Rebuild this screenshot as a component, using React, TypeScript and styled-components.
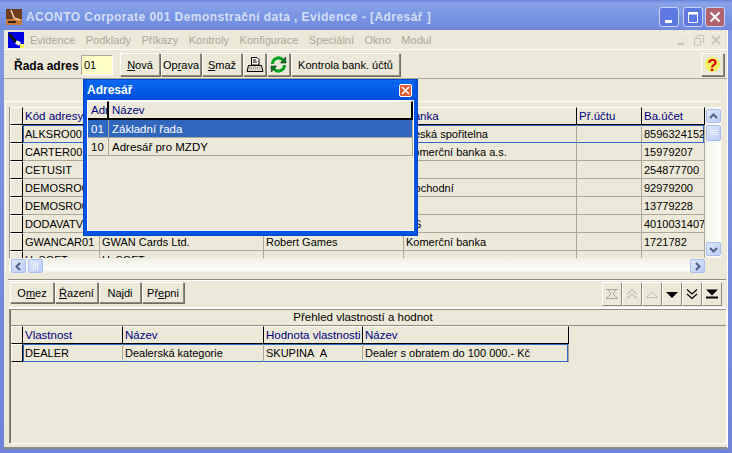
import React from 'react';
import styled, { createGlobalStyle } from 'styled-components';

const GlobalStyle = createGlobalStyle`
  html, body {
    margin: 0;
    padding: 0;
    background: #7a96df;
  }
  * {
    box-sizing: border-box;
  }
`;

const face = '#ece9d8';
const line = '#aca899';
const navy = '#000080';
const select = '#316ac5';

const Window = styled.div`
  width: 732px;
  height: 453px;
  overflow: hidden;
  position: relative;
  display: flex;
  flex-direction: column;
  padding: 0 4px 4px;
  background: linear-gradient(#7f9ae2, #6f84d8);
  font-family: 'Liberation Sans', Arial, sans-serif;
  font-size: 11px;
  color: #000;
`;

const TitleBar = styled.div`
  height: 30px;
  flex: none;
  margin: 0 -4px;
  padding: 3px 7px 0 6px;
  display: flex;
  align-items: center;
  gap: 4px;
  background: linear-gradient(#6b87dc 0%, #8aa4ea 12%, #7a96e4 50%, #7089dc 100%);
`;

const TitleText = styled.div`
  flex: 1;
  color: #d5dff7;
  font-weight: bold;
  font-size: 12px;
  letter-spacing: 0.45px;
  white-space: nowrap;
`;

const CaptionButton = styled.div<{ $close?: boolean }>`
  width: 20px;
  height: 20px;
  border: 1px solid #c9d4f4;
  border-radius: 3px;
  background: ${(p) => (p.$close ? '#b1626f' : '#5d78e0')};
  margin-left: ${(p) => (p.$close ? -2 : 0)}px;
  display: flex;
  align-items: center;
  justify-content: center;
`;

const Client = styled.div`
  flex: 1;
  min-height: 0;
  display: flex;
  flex-direction: column;
  background: ${face};
  border-right: 1px solid #fff;
  border-bottom: 2px solid #8f8c7e;
`;

const MenuBar = styled.div`
  height: 20px;
  flex: none;
  display: flex;
  align-items: center;
  padding: 0 3px 0 4px;
  background: ${face};
  border-bottom: 1px solid #fff;
`;

const MenuIcon = styled.div`
  width: 16px;
  height: 16px;
  margin-right: 6px;
  flex: none;
`;

const MenuItem = styled.span`
  color: #aca899;
  font-size: 11px;
  margin-right: 10.5px;
`;

const MdiButtons = styled.div`
  margin-left: auto;
  display: flex;
  gap: 1px;
`;

const MdiButton = styled.div`
  width: 16px;
  height: 16px;
  border: 1px solid #f1efe3;
  display: flex;
  align-items: center;
  justify-content: center;
`;

const Toolbar = styled.div`
  height: 29px;
  flex: none;
  display: flex;
  align-items: center;
  padding: 1px 2px 0 10px;
  border-bottom: 1px solid ${line};
`;

const SeriesLabel = styled.label`
  font-weight: bold;
  font-size: 12px;
  width: 67px;
  flex: none;
  margin-top: 2px;
  white-space: nowrap;
`;

const SeriesInput = styled.div`
  width: 32px;
  height: 20px;
  flex: none;
  background: #ffffc8;
  border: 1px solid;
  border-color: #aca899 #fff #fff #aca899;
  padding: 3px 2px;
  margin-right: 7px;
  font-size: 11px;
`;

const Btn = styled.button<{ $w: number; $h?: number }>`
  width: ${(p) => p.$w}px;
  height: ${(p) => p.$h ?? 23}px;
  flex: none;
  padding: 0;
  margin: 0 1px 0 0;
  font: inherit;
  font-size: 11px;
  color: #000;
  background: ${face};
  border: 1px solid;
  border-color: #fff #8f8c7e #8f8c7e #fff;
  box-shadow: 1px 1px 0 #716f64;
  display: inline-flex;
  align-items: center;
  justify-content: center;
`;

const ToolSpacer = styled.div`
  flex: 1;
`;

const Gap = styled.div`
  height: 22px;
  flex: none;
`;

const GridPanel = styled.div`
  flex: none;
  height: 172px;
  margin: 0 6px 0 1px;
  border-top: 1px solid #fff;
  border-left: 1px solid #fff;
  padding: 5px 0 0 3px;
  display: flex;
  flex-direction: column;
`;

const GridArea = styled.div`
  flex: 1;
  min-height: 0;
  display: flex;
`;

const GridClip = styled.div`
  flex: 1;
  min-width: 0;
  overflow: hidden;
  border-left: 1px solid #8f8c7e;
`;

const Row = styled.div<{ $cols: string; $h?: number }>`
  display: grid;
  grid-template-columns: ${(p) => p.$cols};
  height: ${(p) => p.$h ?? 18}px;
`;

const Indicator = styled.div`
  background: ${face};
  border: 1px solid;
  border-color: #fff #000 #000 #fff;
`;

const Head = styled.div`
  color: ${navy};
  padding: 2px 0 0 2px;
  white-space: nowrap;
  overflow: hidden;
  background: ${face};
  border-top: 1px solid #fff;
  border-right: 1px solid #000;
  border-bottom: 1px solid #000;
  font-size: 11.5px;
`;

const edgeShadow = { first: `, inset 1px 0 0 ${select}`, last: `, inset -1px 0 0 ${select}` };

const Cell = styled.div<{ $active?: boolean; $edge?: 'first' | 'last' }>`
  padding: 3px 0 0 2px;
  white-space: nowrap;
  overflow: hidden;
  font-size: 11px;
  border-right: 1px solid ${line};
  border-bottom: 1px solid ${line};
  ${(p) =>
    p.$active &&
    `border-bottom-color: ${select};
     box-shadow: inset 0 1px 0 ${select}${p.$edge ? edgeShadow[p.$edge] : ''};`}
`;

const VScroll = styled.div`
  width: 16px;
  flex: none;
  display: flex;
  flex-direction: column;
  gap: 2px;
  padding: 2px 0 2px 1px;
  background: linear-gradient(90deg, #f3f2ea, #fdfdfb);
`;

const Track = styled.div`
  flex: 1;
`;

const HScroll = styled.div`
  height: 15px;
  flex: none;
  display: flex;
  align-items: flex-end;
  gap: 2px;
  margin-right: 16px;
  padding-left: 2px;
  background: linear-gradient(#f0efe6, #fdfdfb 80%, ${face});
`;

const ScrollBtn = styled.div<{ $thumb?: boolean }>`
  width: 15px;
  height: ${(p) => (p.$thumb ? 16 : 14)}px;
  flex: none;
  border: 1px solid #a9bff0;
  border-radius: 2px;
  background: linear-gradient(135deg, #dfe8fb, #bcccf5);
  display: flex;
  align-items: center;
  justify-content: center;
`;

const HThumb = styled(ScrollBtn)`
  height: 14px;
`;

const NavBar = styled.div`
  height: 28px;
  flex: none;
  margin: 6px 1px 0 4px;
  padding: 2px 4px 0 2px;
  display: flex;
  align-items: flex-start;
  border-top: 1px solid #8f8c7e;
  box-shadow: inset 0 1px 0 #fff;
`;

const NavSpacer = styled.div`
  flex: 1;
`;

const NavButton = styled.div`
  width: 20px;
  height: 24px;
  flex: none;
  background: ${face};
  border: 1px solid;
  border-color: #fff #8f8c7e #8f8c7e #fff;
  display: flex;
  align-items: center;
  justify-content: center;
`;

const DetailPanel = styled.div`
  flex: 1;
  min-height: 0;
  margin: 0 1px 4px 5px;
  border-top: 2px solid #fff;
  display: flex;
  flex-direction: column;
`;

const DetailInner = styled.div`
  flex: 1;
  border-top: 1px solid #8f8c7e;
  border-left: 1px solid #8f8c7e;
  box-shadow: inset 1px 0 0 #716f64, 1px 1px 0 #fff;
  display: flex;
  flex-direction: column;
  padding-left: 1px;
`;

const DetailCaption = styled.div`
  height: 16px;
  flex: none;
  text-align: center;
  padding-top: 1px;
  padding-right: 10px;
  font-size: 11.5px;
  border-bottom: 1px solid #8f8c7e;
  margin-left: -1px;
`;

const Dialog = styled.div`
  position: absolute;
  left: 83px;
  top: 79px;
  width: 335px;
  height: 157px;
  background: #0054e3;
  border: 1px solid #0047c8;
  padding: 0 3px 4px;
  display: flex;
  flex-direction: column;
`;

const DialogTitle = styled.div`
  height: 20px;
  flex: none;
  display: flex;
  align-items: center;
  justify-content: space-between;
  color: #fff;
  font-weight: bold;
  font-size: 12px;
  background: linear-gradient(#0a6af0, #0058e6 60%, #0450d8);
`;

const DialogClose = styled.div`
  width: 13px;
  height: 13px;
  margin-right: 2px;
  border: 1px solid #fff;
  border-radius: 2px;
  background: #dd5a33;
  display: flex;
  align-items: center;
  justify-content: center;
`;

const DialogBody = styled.div`
  flex: 1;
  background: ${face};
  border: 1px solid #fff;
`;

const DialogHead = styled(Head)`
  padding-left: 3px;
  border-bottom-width: 2px;
  border-right-width: 2px;
`;

const DialogCell = styled.div<{ $sel?: boolean; $dark?: boolean }>`
  padding: 3px 0 0 3px;
  white-space: nowrap;
  overflow: hidden;
  font-size: 11.5px;
  color: ${(p) => (p.$sel ? '#fff' : '#000')};
  background: ${(p) => (p.$sel ? (p.$dark ? select : '#3166bd') : 'transparent')};
  border-right: 1px solid ${line};
  border-bottom: 1px solid ${line};
`;

const Underline = styled.span`
  text-decoration: underline;
`;

const gridCols = '13px 77px 164px 140px 173px 65px 63px';
const rows = [
  ['ALKSRO001', '', '', 'Česká spořitelna', '', '8596324152'],
  ['CARTER001', '', '', 'Komerční banka a.s.', '', '15979207'],
  ['CETUSIT', '', '', '', '', '254877700'],
  ['DEMOSRO01', '', '', 'Obchodní', '', '92979200'],
  ['DEMOSRO02', '', '', '', '', '13779228'],
  ['DODAVATV', '', '', 'ČS', '', '4010031407'],
  ['GWANCAR01', 'GWAN Cards Ltd.', 'Robert Games', 'Komerční banka', '', '1721782'],
  ['HxSOFT', 'HxSOFT', '', '', '', ''],
];

const menu = ['Evidence', 'Podklady', 'Příkazy', 'Kontroly', 'Konfigurace', 'Speciální', 'Okno', 'Modul'];
const detailCols = '12px 100px 141px 99px 206px';

const edgeOf = (i: number, last: number) => (i === 0 ? 'first' : i === last ? 'last' : undefined);

const Chevron = ({ d, color = '#4d6185' }: { d: string; color?: string }) => (
  <svg width="9" height="9" viewBox="0 0 9 9">
    <path d={d} fill="none" stroke={color} strokeWidth="2" />
  </svg>
);

const NavIcon = ({ children }: { children: React.ReactNode }) => (
  <svg width="14" height="12" viewBox="0 0 14 12">
    {children}
  </svg>
);

const App: React.FC = () => {
  return (
    <Window>
      <GlobalStyle />
      <TitleBar>
        <svg width="16" height="16" viewBox="0 0 16 16">
          <rect width="16" height="16" fill="#6e3c1c" />
          <rect y="10" width="16" height="6" fill="#c87a3c" />
          <path d="M5 1 L8 9 L14 11" fill="none" stroke="#f0d8b8" strokeWidth="1.5" />
          <path d="M2 13 H10" stroke="#3a2010" strokeWidth="2" />
        </svg>
        <TitleText>ACONTO Corporate 001 Demonstrační data , Evidence - [Adresář ]</TitleText>
        <CaptionButton>
          <svg width="14" height="14" viewBox="0 0 14 14">
            <rect x="3" y="10" width="7" height="3" fill="#fff" />
          </svg>
        </CaptionButton>
        <CaptionButton>
          <svg width="14" height="14" viewBox="0 0 14 14">
            <path d="M2.5 3 V12.5 H11.5 V3" fill="none" stroke="#fff" strokeWidth="1" />
            <rect x="2" y="2" width="10" height="2.5" fill="#fff" />
          </svg>
        </CaptionButton>
        <CaptionButton $close>
          <svg width="14" height="14" viewBox="0 0 14 14">
            <path d="M2.5 2.5 L11.5 11.5 M11.5 2.5 L2.5 11.5" stroke="#fff" strokeWidth="2.2" />
          </svg>
        </CaptionButton>
      </TitleBar>
      <Client>
        <MenuBar>
          <MenuIcon>
            <svg width="16" height="16" viewBox="0 0 16 16">
              <rect width="16" height="16" fill="#0000e0" />
              <path d="M1 2 L8 10" stroke="#111" strokeWidth="3" />
              <path d="M8 10 L12 12" stroke="#fff" strokeWidth="4" />
              <rect x="12" y="12" width="4" height="4" fill="#ffff60" />
            </svg>
          </MenuIcon>
          {menu.map((m) => (
            <MenuItem key={m}>{m}</MenuItem>
          ))}
          <MdiButtons>
            <MdiButton>
              <svg width="12" height="12" viewBox="0 0 12 12">
                <rect x="2" y="9" width="6" height="2" fill="#c9c6b6" />
              </svg>
            </MdiButton>
            <MdiButton>
              <svg width="12" height="12" viewBox="0 0 12 12">
                <path d="M1.5 4.5 H7.5 V11 H1.5 Z M4 4 V1.5 H10.5 V8 H8" fill="none" stroke="#c9c6b6" />
              </svg>
            </MdiButton>
            <MdiButton>
              <svg width="12" height="12" viewBox="0 0 12 12">
                <path d="M2 2 L10 10 M10 2 L2 10" stroke="#c9c6b6" strokeWidth="2" />
              </svg>
            </MdiButton>
          </MdiButtons>
        </MenuBar>
        <Toolbar>
          <SeriesLabel>Řada adres</SeriesLabel>
          <SeriesInput>01</SeriesInput>
          <Btn $w={40}>
            <span>
              <Underline>N</Underline>ová
            </span>
          </Btn>
          <Btn $w={40}>
            <span>
              Op<Underline>r</Underline>ava
            </span>
          </Btn>
          <Btn $w={40}>
            <span>
              <Underline>S</Underline>maž
            </span>
          </Btn>
          <Btn $w={23}>
            <svg width="18" height="17" viewBox="0 0 18 17">
              <path d="M5.5 1.5 H11 L13 3.5 V9 H5.5 Z" fill="#fff" stroke="#000" />
              <path d="M7 4 H10 M7 6 H11" stroke="#000" />
              <path d="M2.5 9.5 H15.5 L17 15.5 H1 Z" fill="#d8d5c8" stroke="#000" />
              <path d="M3 12 H15" stroke="#777" strokeDasharray="1 1" />
            </svg>
          </Btn>
          <Btn $w={23}>
            <svg width="17" height="17" viewBox="0 0 17 17">
              <path d="M2.5 8 A6 6 0 0 1 13 4" fill="none" stroke="#00a020" strokeWidth="3" />
              <path d="M10.5 7 L16 7 L15.5 1 Z" fill="#008018" stroke="#000" strokeWidth="0.5" />
              <path d="M14.5 9 A6 6 0 0 1 4 13" fill="none" stroke="#00a020" strokeWidth="3" />
              <path d="M6.5 10 L1 10 L1.5 16 Z" fill="#008018" stroke="#000" strokeWidth="0.5" />
            </svg>
          </Btn>
          <Btn $w={109}>Kontrola bank. účtů</Btn>
          <ToolSpacer />
          <Btn $w={23}>
            <svg width="17" height="17" viewBox="0 0 17 17">
              <circle cx="8.5" cy="8.5" r="7.5" fill="#f4f060" />
              <text x="8.5" y="14.5" textAnchor="middle" fill="#e00000" fontSize="17" fontWeight="bold" fontFamily="Liberation Sans">
                ?
              </text>
            </svg>
          </Btn>
        </Toolbar>
        <Gap />
        <GridPanel>
          <GridArea>
            <GridClip>
              <Row $cols={gridCols}>
                <Indicator />
                {['Kód adresy', 'Název', 'Kontakt', 'Banka', 'Př.účtu', 'Ba.účet'].map((h) => (
                  <Head key={h}>{h}</Head>
                ))}
              </Row>
              {rows.map((r, i) => (
                <Row $cols={gridCols} key={i}>
                  <Indicator />
                  {r.map((c, j) => (
                    <Cell key={j} $active={i === 0} $edge={edgeOf(j, r.length - 1)}>
                      {c}
                    </Cell>
                  ))}
                </Row>
              ))}
            </GridClip>
            <VScroll>
              <ScrollBtn>
                <Chevron d="M1 6 L4.5 2.5 L8 6" />
              </ScrollBtn>
              <ScrollBtn $thumb>
                <svg width="8" height="6" viewBox="0 0 8 6">
                  <path d="M0 .5 H8 M0 2.5 H8 M0 4.5 H8" stroke="#eef2fd" />
                </svg>
              </ScrollBtn>
              <Track />
              <ScrollBtn>
                <Chevron d="M1 3 L4.5 6.5 L8 3" />
              </ScrollBtn>
            </VScroll>
          </GridArea>
          <HScroll>
            <ScrollBtn>
              <Chevron d="M6 1 L2.5 4.5 L6 8" />
            </ScrollBtn>
            <HThumb>
              <svg width="6" height="8" viewBox="0 0 6 8">
                <path d="M.5 0 V8 M2.5 0 V8 M4.5 0 V8" stroke="#eef2fd" />
              </svg>
            </HThumb>
            <Track />
            <ScrollBtn>
              <Chevron d="M3 1 L6.5 4.5 L3 8" />
            </ScrollBtn>
          </HScroll>
        </GridPanel>
        <NavBar>
          <Btn $w={44} $h={21}>
            <span>
              O<Underline>m</Underline>ez
            </span>
          </Btn>
          <Btn $w={43} $h={21}>
            <span>
              <Underline>Ř</Underline>azení
            </span>
          </Btn>
          <Btn $w={42} $h={21}>Najdi</Btn>
          <Btn $w={42} $h={21}>
            <span>
              Př<Underline>e</Underline>pni
            </span>
          </Btn>
          <NavSpacer />
          <NavButton>
            <NavIcon>
              <path d="M1 1.5 H13 M3 1.5 L11 1.5 L8 6 L13 10.5 H1 L6 6 Z" fill="none" stroke="#aca899" />
            </NavIcon>
          </NavButton>
          <NavButton>
            <NavIcon>
              <path d="M2 6 L7 1.5 L12 6 M2 10.5 L7 6 L12 10.5" fill="none" stroke="#c4c1b2" strokeWidth="1.2" />
            </NavIcon>
          </NavButton>
          <NavButton>
            <NavIcon>
              <path d="M1.5 9.5 L7 3.5 L12.5 9.5 Z" fill="none" stroke="#c4c1b2" />
            </NavIcon>
          </NavButton>
          <NavButton>
            <NavIcon>
              <path d="M1 4 H13 L7 10 Z" fill="#000" />
            </NavIcon>
          </NavButton>
          <NavButton>
            <NavIcon>
              <path d="M2 1.5 L7 6 L12 1.5 M2 6 L7 10.5 L12 6" fill="none" stroke="#000" strokeWidth="1.2" />
            </NavIcon>
          </NavButton>
          <NavButton>
            <NavIcon>
              <path d="M1 1.5 H13 L7 7.5 Z" fill="#000" />
              <rect x="1" y="8.5" width="12" height="2" fill="#000" />
            </NavIcon>
          </NavButton>
        </NavBar>
        <DetailPanel>
          <DetailInner>
            <DetailCaption>Přehled vlastností a hodnot</DetailCaption>
            <div>
              <Row $cols={detailCols}>
                <Indicator />
                {['Vlastnost', 'Název', 'Hodnota vlastnosti', 'Název'].map((h, i) => (
                  <Head key={i}>{h}</Head>
                ))}
              </Row>
              <Row $cols={detailCols}>
                <Indicator />
                <Cell $active $edge="first">DEALER</Cell>
                <Cell $active>Dealerská kategorie</Cell>
                <Cell $active>SKUPINA&nbsp; A</Cell>
                <Cell $active $edge="last">Dealer s obratem do 100 000.- Kč</Cell>
              </Row>
            </div>
          </DetailInner>
        </DetailPanel>
      </Client>
      <Dialog>
        <DialogTitle>
          Adresář
          <DialogClose>
            <svg width="9" height="9" viewBox="0 0 9 9">
              <path d="M1 1 L8 8 M8 1 L1 8" stroke="#fff" strokeWidth="1.6" />
            </svg>
          </DialogClose>
        </DialogTitle>
        <DialogBody>
          <Row $cols="21px 1fr" $h={19}>
            <DialogHead>Adr</DialogHead>
            <DialogHead>Název</DialogHead>
          </Row>
          <Row $cols="21px 1fr">
            <DialogCell $sel $dark>01</DialogCell>
            <DialogCell $sel>Základní řada</DialogCell>
          </Row>
          <Row $cols="21px 1fr">
            <DialogCell>10</DialogCell>
            <DialogCell>Adresář pro MZDY</DialogCell>
          </Row>
        </DialogBody>
      </Dialog>
    </Window>
  );
};

export default App;
